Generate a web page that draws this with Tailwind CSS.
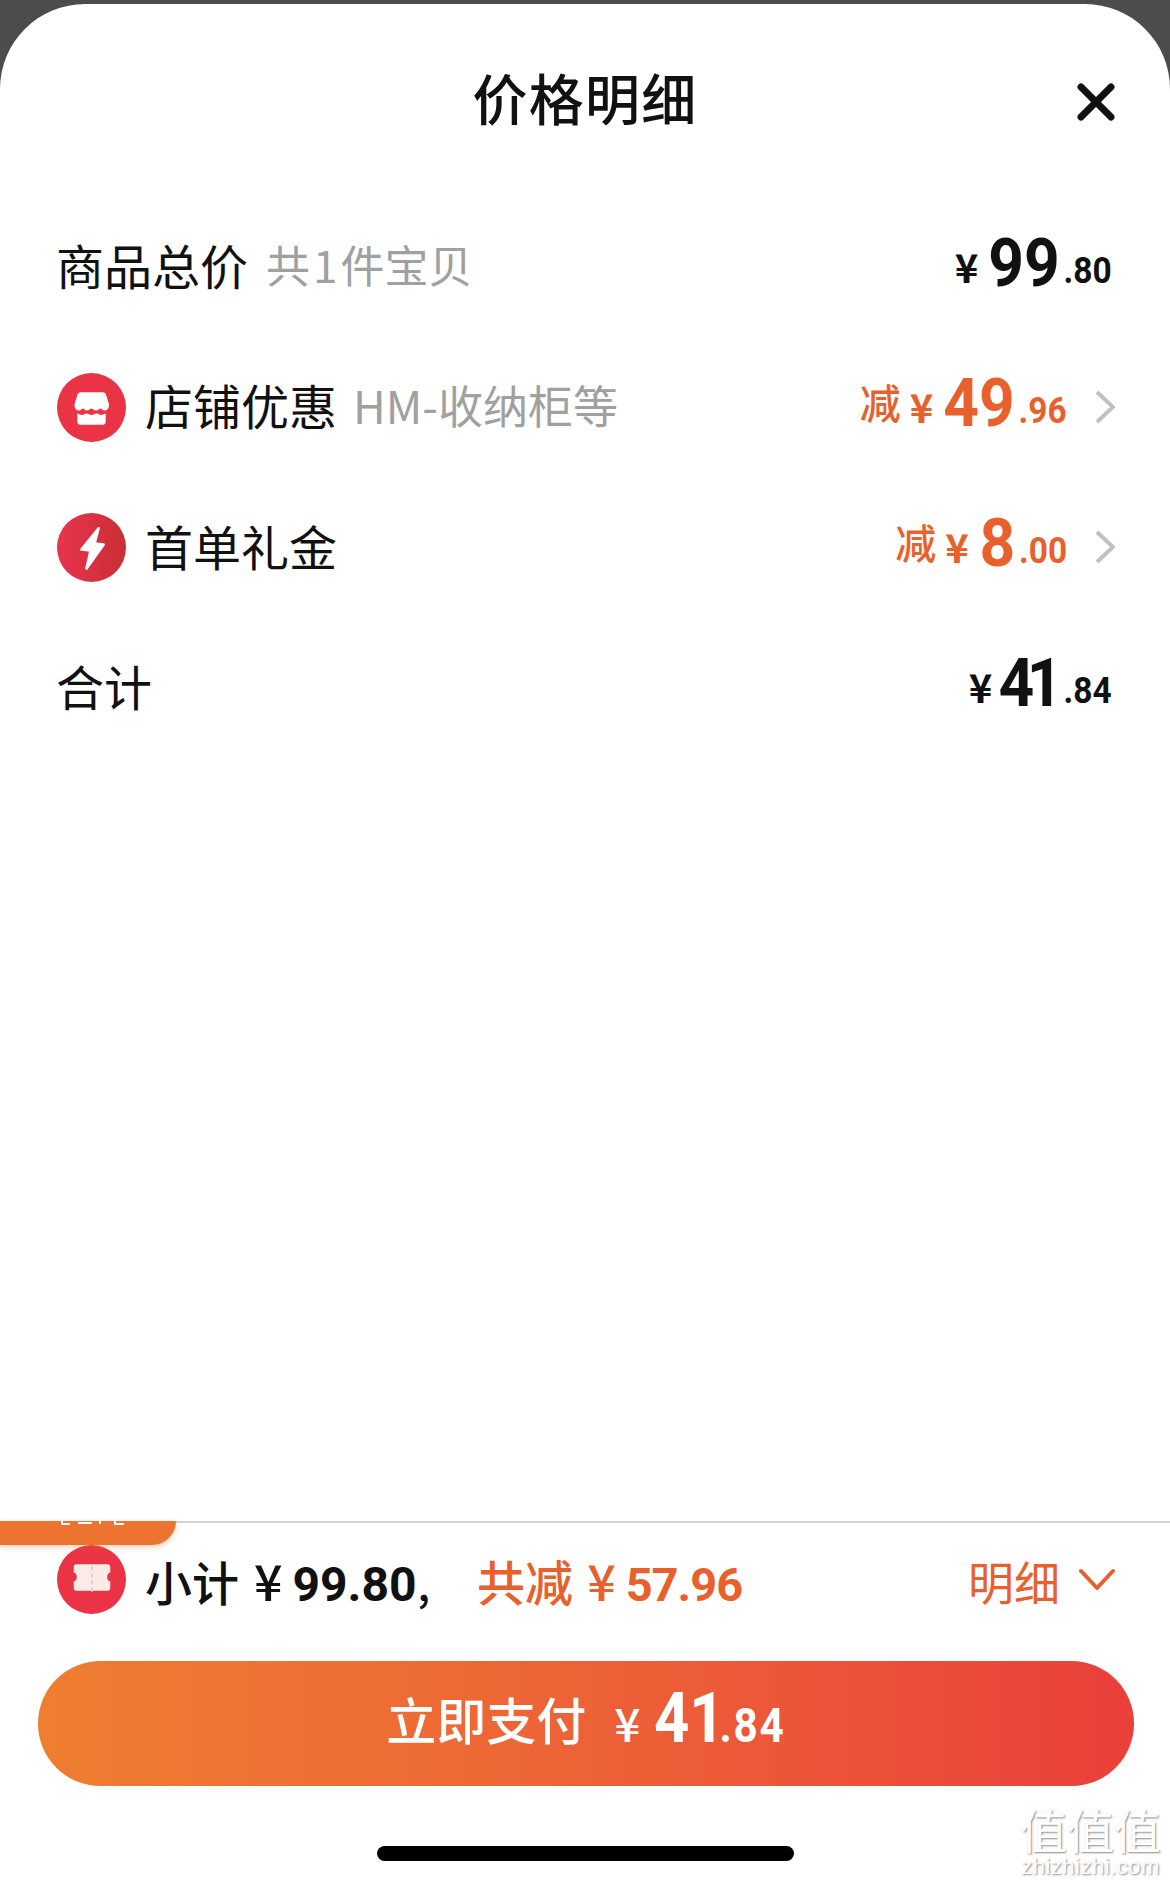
<!DOCTYPE html>
<html lang="zh-CN">
<head>
<meta charset="utf-8">
<script src="https://cdn.jsdelivr.net/npm/@tailwindcss/browser@4"></script>
</head>
<body class="m-0 bg-[#4c4c4c]">
<div class="w-[1170px] h-[1885px] pt-[4px] overflow-hidden font-['Noto_Sans_CJK_SC','Noto_Sans',sans-serif] text-[#111]">
  <div class="relative w-full h-[1881px] bg-white rounded-t-[85px] flex flex-col">
    <header class="relative h-[193px] shrink-0 flex items-center justify-center">
      <h1 class="text-[55px] leading-none font-medium tracking-[1.300px] pb-[8px]">价格明细</h1>
      <svg class="absolute left-[1075px] top-[77px] w-[42px] h-[42px]" viewBox="0 0 42 42"><path d="M6 6 36 36M36 6 6 36" stroke="#111" stroke-width="7" stroke-linecap="round" fill="none"/></svg>
    </header>

    <main class="flex-1 flex flex-col">
      <div class="h-[140px] flex items-center justify-between pl-[56px] pr-[58px]">
        <div class="flex items-center mb-[6px]"><span class="text-[48px] leading-none">商品总价</span><span class="ml-[18px] text-[44px] leading-none text-[#a0a0a0]">共<span class="mx-[3px]">1</span>件宝贝</span></div>
        <div class="flex items-baseline -translate-y-[4px] font-['Roboto',sans-serif] font-bold">
          <span class="text-[40px] leading-none font-['Noto_Sans_CJK_SC'] mr-[10px] -translate-y-[3px]">¥</span>
          <span class="flex items-baseline -ml-[9px] origin-right scale-x-[0.93]">
            <span class="text-[67px] leading-none">99</span>
            <span class="text-[36px] leading-none -translate-y-[3px] ml-[4px]">.80</span>
          </span>
        </div>
      </div>

      <div class="h-[140px] flex items-center justify-between pl-[57px] pr-[55px]">
        <div class="flex items-center">
          <svg class="w-[69px] h-[69px] shrink-0" viewBox="0 0 68 68"><circle cx="34" cy="34" r="34" fill="#ea3344"/><path d="M23 19h22c2 0 3 1 3.500 3l2.500 8c1 3.500-1 7-4 7-2 0-3-2-4-2s-2.500 2-4.500 2-3.500-2-4.500-2-2.500 2-4.500 2-3-2-4-2-2 2-4 2c-3 0-5-3.500-4-7l2.500-8c.5-2 1.500-3 3.500-3z" fill="#fff"/><path d="M20 40c1.500 0 2.500 1.500 4.500 1.500s3-1.500 4.500-1.500 3 1.500 5 1.500 3-1.500 5-1.500 3 1.500 4.500 1.500 2-1 4.500-1.500v8c0 2-1 3-3 3H23c-2 0-3-1-3-3z" fill="#fff"/></svg>
          <span class="ml-[19px] text-[48px] leading-none mb-[6px]">店铺优惠</span><span class="ml-[16px] text-[45px] leading-none text-[#a0a0a0] mb-[6px]">HM-收纳柜等</span>
        </div>
        <div class="flex items-center">
          <div class="flex items-baseline -translate-y-[4px] text-[#e8602c] font-['Roboto',sans-serif] font-bold">
            <span class="text-[41px] leading-none font-medium font-['Noto_Sans_CJK_SC'] mr-[9px] -translate-y-[7px]">减</span>
            <span class="text-[40px] leading-none font-['Noto_Sans_CJK_SC'] mr-[10px] -translate-y-[3px]">¥</span>
            <span class="flex items-baseline -ml-[9px] origin-right scale-x-[0.93]">
              <span class="text-[67px] leading-none">49</span>
              <span class="text-[36px] leading-none -translate-y-[3px] ml-[4px]">.96</span>
            </span>
          </div>
          <svg class="ml-[28px] w-[20px] h-[34px]" viewBox="0 0 20 34"><path d="M2 2 18 17 2 32" stroke="#c0c0c0" stroke-width="4" fill="none"/></svg>
        </div>
      </div>

      <div class="h-[140px] flex items-center justify-between pl-[57px] pr-[55px]">
        <div class="flex items-center">
          <svg class="w-[69px] h-[69px] shrink-0" viewBox="0 0 68 68"><defs><linearGradient id="b"><stop offset="0" stop-color="#e8344f"/><stop offset="1" stop-color="#c92f33"/></linearGradient></defs><circle cx="34" cy="34" r="34" fill="url(#b)"/><path d="M41 15 24 36 33 37 29 55 46 31 37 30Z" fill="#fff" stroke="#fff" stroke-width="2.500" stroke-linejoin="round"/></svg>
          <span class="ml-[19px] text-[48px] leading-none mb-[5px]">首单礼金</span>
        </div>
        <div class="flex items-center">
          <div class="flex items-baseline -translate-y-[4px] text-[#e8602c] font-['Roboto',sans-serif] font-bold">
            <span class="text-[41px] leading-none font-medium font-['Noto_Sans_CJK_SC'] mr-[9px] -translate-y-[7px]">减</span>
            <span class="text-[40px] leading-none font-['Noto_Sans_CJK_SC'] mr-[10px] -translate-y-[3px]">¥</span>
            <span class="flex items-baseline -ml-[6px] origin-right scale-x-[0.93]">
              <span class="text-[67px] leading-none">8</span>
              <span class="text-[36px] leading-none -translate-y-[3px] ml-[4px]">.00</span>
            </span>
          </div>
          <svg class="ml-[28px] w-[20px] h-[34px]" viewBox="0 0 20 34"><path d="M2 2 18 17 2 32" stroke="#c0c0c0" stroke-width="4" fill="none"/></svg>
        </div>
      </div>

      <div class="h-[140px] flex items-center justify-between pl-[56px] pr-[58px]">
        <span class="text-[48px] leading-none mb-[5px]">合计</span>
        <div class="flex items-baseline -translate-y-[4px] font-['Roboto',sans-serif] font-bold">
          <span class="text-[40px] leading-none font-['Noto_Sans_CJK_SC'] mr-[7px] -translate-y-[3px]">¥</span>
          <span class="flex items-baseline -ml-[9px] origin-right scale-x-[0.93]">
            <span class="text-[67px] leading-none tracking-[-8px]">41</span>
            <span class="text-[36px] leading-none -translate-y-[3px] ml-[9px]">.84</span>
          </span>
        </div>
      </div>
    </main>

    <footer class="relative shrink-0 border-t-2 border-[#d4d4d4] pb-[24px]">
      <div class="absolute left-0 top-[-2px] w-[176px] h-[24px] rounded-br-[30px] bg-[#ec7430] shadow-[0_2px_6px_rgba(236,116,48,0.35)]">
        <svg class="absolute left-[60px] top-0 w-[90px] h-[4px]" viewBox="0 0 90 4"><path d="M2 0v3h8M18 2h14M40 0v3M55 0v3h9" stroke="#fff" stroke-width="2" fill="none"/></svg>
      </div>
      <div class="h-[113px] flex items-center justify-between pl-[57px] pr-[55px]">
        <div class="flex items-center">
          <svg class="w-[69px] h-[69px] shrink-0" viewBox="0 0 68 68"><circle cx="34" cy="34" r="34" fill="#ea3344"/><path d="M19 19h31c1.500 0 2.500 1 2.500 2.500v5.500c-4 .5-4 8.500 0 9v6.500c0 1.500-1 2.500-2.500 2.500H19c-1.500 0-2.500-1-2.500-2.500V36c4-.5 4-8.500 0-9v-5.500c0-1.500 1-2.500 2.500-2.500z" fill="#f9ece8"/><path d="M34.500 21v26" stroke="#f3c9c4" stroke-width="2" stroke-dasharray="4 3"/></svg>
          <div class="ml-[19px] mt-[3px] flex items-baseline leading-none">
            <span class="text-[47px] font-medium">小计</span>
            <span class="ml-[15px] font-['Noto_Sans_CJK_SC'] font-medium text-[50px]">¥</span>
            <span class="ml-[10px] font-['Roboto',sans-serif] font-bold text-[48px]">99.80</span>
            <span class="font-['Noto_Sans_CJK_SC'] font-medium text-[42px] ml-[1px]">,</span>
            <span class="ml-[47px] text-[#e8602c] text-[48px] font-medium">共减</span>
            <span class="ml-[14px] text-[#e8602c] font-['Noto_Sans_CJK_SC'] font-medium text-[50px]">¥</span>
            <span class="ml-[10px] text-[#e8602c] font-['Roboto',sans-serif] font-bold text-[47px] tracking-[-1px]">57.96</span>
          </div>
        </div>
        <div class="flex items-center text-[#e8602c]">
          <span class="text-[46px] leading-none">明细</span>
          <svg class="ml-[19px] w-[36px] h-[24px]" viewBox="0 0 36 24"><path d="M2 3 18 20 34 3" stroke="#e8602c" stroke-width="4" stroke-linecap="round" stroke-linejoin="round" fill="none"/></svg>
        </div>
      </div>
      <div class="pl-[38px] pr-[36px] pt-[25px]">
        <div class="h-[125px] rounded-full bg-linear-to-r from-[#ee7e30] to-[#ea3f3a] flex items-center justify-center text-white">
          <div class="flex items-baseline -translate-y-[6px]">
            <span class="text-[50px] leading-none font-medium -translate-y-[2px]">立即支付</span>
            <span class="ml-[28px] font-medium text-[46px] leading-none">¥</span>
            <span class="ml-[14px] -mr-[18px] flex items-baseline origin-left scale-x-[0.88] font-['Roboto',sans-serif] font-bold">
              <span class="text-[70px] leading-none">41</span>
              <span class="text-[48px] leading-none tracking-[2px] -ml-[6px]">.84</span>
            </span>
          </div>
        </div>
      </div>
      <div class="mt-[60px] mx-auto w-[417px] h-[15px] rounded-full bg-black"></div>
      <div class="absolute left-[1018px] top-[281px] w-[145px] text-center text-white [text-shadow:1px_1px_2px_#8a8a8a]">
        <div class="text-[47px] leading-[50px] whitespace-nowrap">值值值</div>
        <div class="text-[22px] leading-[26px] font-['Liberation_Sans'] tracking-[0.5px]">zhizhizhi.com</div>
      </div>
    </footer>
  </div>
</div>
</body>
</html>
